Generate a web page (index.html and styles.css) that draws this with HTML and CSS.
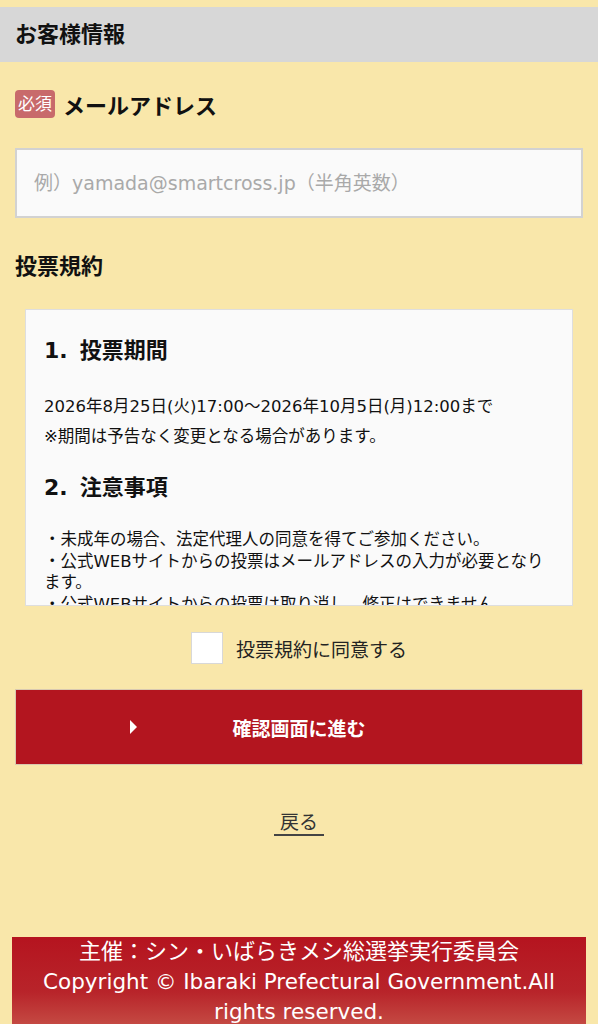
FILE: index.html
```html
<!DOCTYPE html>
<html lang="ja">
<head>
  <meta charset="UTF-8">
  <meta name="viewport" content="width=device-width, initial-scale=1.0">
  <title>投票フォーム | シン・いばらきメシ総選挙</title>
  <link rel="stylesheet" href="styles.css">
</head>
<body>
  <div class="page">
    <h2 class="section-title">お客様情報</h2>

    <div class="form">
      <label class="field-label" for="email">
        <span class="required">必須</span>メールアドレス
      </label>
      <input type="email" id="email" class="text-input" placeholder="例）yamada@smartcross.jp（半角英数）">

      <h3 class="terms-title">投票規約</h3>
      <div class="terms">
        <h4><span class="num">1.</span>投票期間</h4>
        <p class="period">2026年8月25日(火)17:00〜2026年10月5日(月)12:00まで<br>※期間は予告なく変更となる場合があります。</p>

        <h4><span class="num">2.</span>注意事項</h4>
        <p class="notes">・未成年の場合、法定代理人の同意を得てご参加ください。<br>
          ・公式WEBサイトからの投票はメールアドレスの入力が必要となります。<br>
          ・公式WEBサイトからの投票は取り消し、修正はできません。<br>
          ・投票は1日1回までとなります。</p>
      </div>

      <label class="agree">
        <input type="checkbox" id="agree">
        <span class="box"></span>
        投票規約に同意する
      </label>

      <button class="submit" type="button">
        <span class="arrow"></span>確認画面に進む
      </button>

      <div class="back-wrap">
        <a class="back" href="#">戻る</a>
      </div>
    </div>
  </div>

  <footer class="site-footer">
    主催：シン・いばらきメシ総選挙実行委員会<br>
    <span class="copy">Copyright © Ibaraki Prefectural Government.All rights reserved.</span>
  </footer>
</body>
</html>
```

FILE: styles.css
```css
* {
  box-sizing: border-box;
}
body {
  margin: 0;
  padding-top: 7px;
  background-color: #f9e7aa;
  font-family: 'DejaVu Sans', 'Noto Sans CJK JP', sans-serif;
  color: #111;
}
.section-title {
  margin: 0;
  background: #d7d7d7;
  height: 55px;
  line-height: 55px;
  padding: 0 15px;
  font-size: 22px;
  font-weight: bold;
}
.form {
  padding: 26px 15px 0;
}
.field-label {
  display: flex;
  align-items: center;
  font-size: 22px;
  font-weight: bold;
  height: 32px;
}
.required {
  background: #c86a6b;
  color: #fff;
  font-size: 17px;
  font-weight: normal;
  border-radius: 4px;
  padding: 0 3px;
  height: 28px;
  line-height: 28px;
  margin-right: 8px;
}
.text-input {
  display: block;
  width: 100%;
  height: 70px;
  margin-top: 28px;
  padding: 0 17px;
  background: #fafafa;
  border: 2px solid #d2d2d2;
  font-size: 19px;
  font-family: inherit;
}
.text-input::placeholder {
  color: #a9a9a9;
}
.terms-title {
  margin: 35px 0 0;
  font-size: 22px;
  line-height: 28px;
}
.terms {
  margin: 28px 10px 0;
  height: 297px;
  overflow: hidden;
  background: #fafafa;
  border: 1px solid #dedede;
  padding: 23px 18px;
}
.terms h4 {
  margin: 0;
  font-size: 22px;
  line-height: 36px;
}
.terms h4 .num {
  margin-right: 12px;
}
.terms p {
  margin: 23px 0 18px;
  font-size: 16.5px;
}
.terms .period {
  line-height: 30px;
}
.terms .notes {
  line-height: 21.5px;
}
.agree {
  display: flex;
  align-items: center;
  justify-content: center;
  margin-top: 26px;
  font-size: 19px;
  color: #222;
}
.agree input {
  display: none;
}
.agree .box {
  width: 32px;
  height: 32px;
  background: #fff;
  border: 1px solid #d8d8d8;
  margin-right: 13px;
}
.submit {
  position: relative;
  display: block;
  width: 100%;
  height: 76px;
  margin-top: 25px;
  background: #b3151f;
  border: 1px solid #d9c9b0;
  color: #fff;
  font-size: 19px;
  font-weight: bold;
  font-family: inherit;
  cursor: pointer;
}
.submit .arrow {
  position: absolute;
  left: 114px;
  top: 50%;
  margin-top: -7px;
  border-left: 7px solid #fff;
  border-top: 7px solid transparent;
  border-bottom: 7px solid transparent;
}
.back-wrap {
  text-align: center;
  margin-top: 45px;
}
.back {
  display: inline-block;
  color: #333;
  text-decoration: none;
  font-size: 19px;
  padding: 0 6px;
  line-height: 24px;
  border-bottom: 2px solid #444;
}
.site-footer {
  margin: 101px 12px 0;
  padding: 0 20px 10px;
  background: linear-gradient(#b5141f 0%, #b8242a 55%, #c9584c 100%);
  color: #fff;
  text-align: center;
  font-size: 22px;
  line-height: 30px;
}
.site-footer .copy {
  font-size: 21.5px;
}
```
